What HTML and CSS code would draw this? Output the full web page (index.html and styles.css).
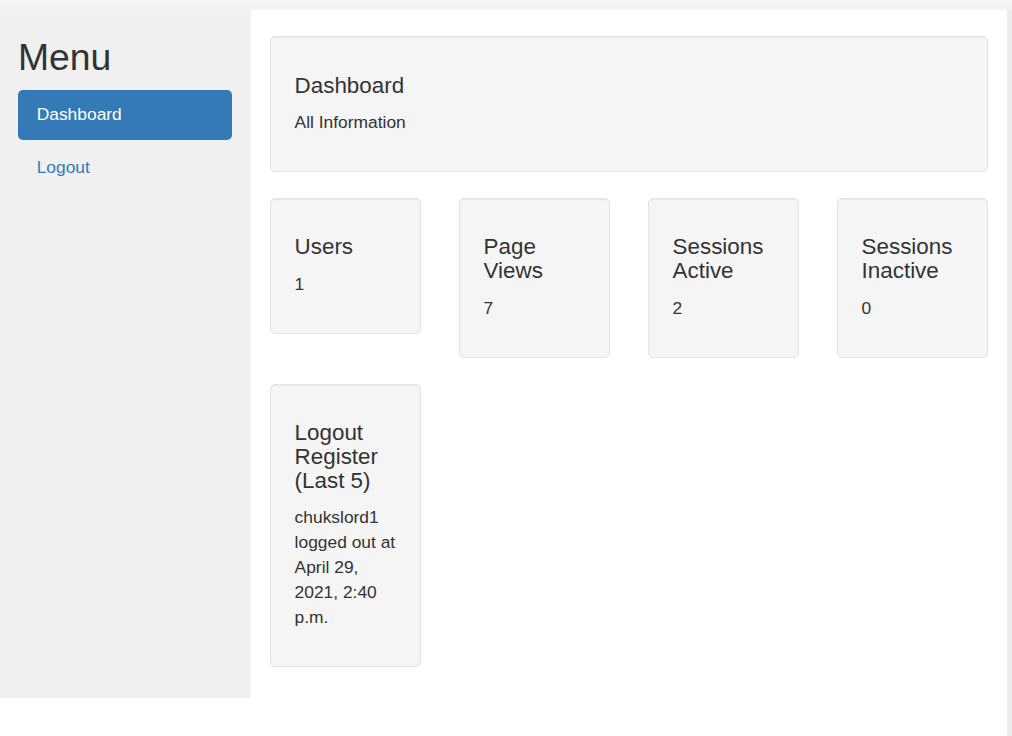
FILE: index.html
```html
<!DOCTYPE html>
<html lang="en">
<head>
<meta charset="utf-8">
<title>Dashboard</title>
<link rel="stylesheet" href="styles.css">
</head>
<body>
<div class="topstrip"></div>
<div class="layout">
  <aside class="sidebar">
    <h2 class="menu-title">Menu</h2>
    <ul class="nav">
      <li><a class="nav-link active" href="#">Dashboard</a></li>
      <li><a class="nav-link" href="#">Logout</a></li>
    </ul>
  </aside>
  <main class="main">
    <section class="well well-top">
      <h4 class="well-title">Dashboard</h4>
      <p class="well-text">All Information</p>
    </section>
    <div class="grid">
      <section class="well">
        <h4 class="well-title">Users</h4>
        <p class="well-text">1</p>
      </section>
      <section class="well">
        <h4 class="well-title">Page Views</h4>
        <p class="well-text">7</p>
      </section>
      <section class="well">
        <h4 class="well-title">Sessions Active</h4>
        <p class="well-text">2</p>
      </section>
      <section class="well">
        <h4 class="well-title">Sessions Inactive</h4>
        <p class="well-text">0</p>
      </section>
      <section class="well">
        <h4 class="well-title">Logout Register (Last 5)</h4>
        <p class="well-text">chukslord1 logged out at April 29, 2021, 2:40 p.m.</p>
      </section>
    </div>
  </main>
  <div class="gutter"></div>
</div>
</body>
</html>
```

FILE: styles.css
```css
* { box-sizing: border-box; }

html, body {
  margin: 0;
  padding: 0;
  height: 100%;
  overflow: hidden;
}

body {
  background: #ffffff;
  font-family: "Liberation Sans", Arial, Helvetica, sans-serif;
  font-size: 17.4px;
  line-height: 24.9px;
  color: #333333;
}

.topstrip {
  height: 10px;
  background: linear-gradient(#f6f6f6, #f2f2f2);
}

.layout {
  display: flex;
  align-items: flex-start;
  min-height: calc(100vh - 10px);
}

.sidebar {
  width: 251px;
  flex: 0 0 251px;
  height: 688px;
  background: #f0f0f0;
  padding: 0 19px 0 18px;
}

.menu-title {
  margin: 26.5px 0 12.45px;
  font-size: 37.35px;
  line-height: 41.1px;
  font-weight: 500;
  color: #333333;
}

.nav {
  list-style: none;
  margin: 0;
  padding: 0;
  display: flex;
  flex-direction: column;
  gap: 2.5px;
}

.nav-link {
  display: block;
  padding: 12.45px 18.7px;
  border-radius: 5px;
  color: #337ab7;
  text-decoration: none;
}

.nav-link.active {
  background: #337ab7;
  color: #ffffff;
}

.main {
  flex: 1 1 auto;
  align-self: stretch;
  background: #ffffff;
  padding: 26px 19px 0 19px;
}

.gutter {
  flex: 0 0 5px;
  align-self: stretch;
  background: #ececec;
}

.well {
  background: #f5f5f5;
  border: 1px solid #e3e3e3;
  border-radius: 5px;
  box-shadow: inset 0 1px 1px rgba(0, 0, 0, 0.05);
  padding: 23.6px;
  margin: 0 0 26px;
}

.well-top {
  padding-top: 24.6px;
}

.well-title {
  margin: 12.45px 0;
  font-size: 22.4px;
  line-height: 24px;
  font-weight: 500;
  color: #333333;
}

.well-text {
  margin: 0 0 12.45px;
}

.grid {
  display: grid;
  grid-template-columns: repeat(4, 151px);
  column-gap: 38px;
  align-items: start;
}
```
